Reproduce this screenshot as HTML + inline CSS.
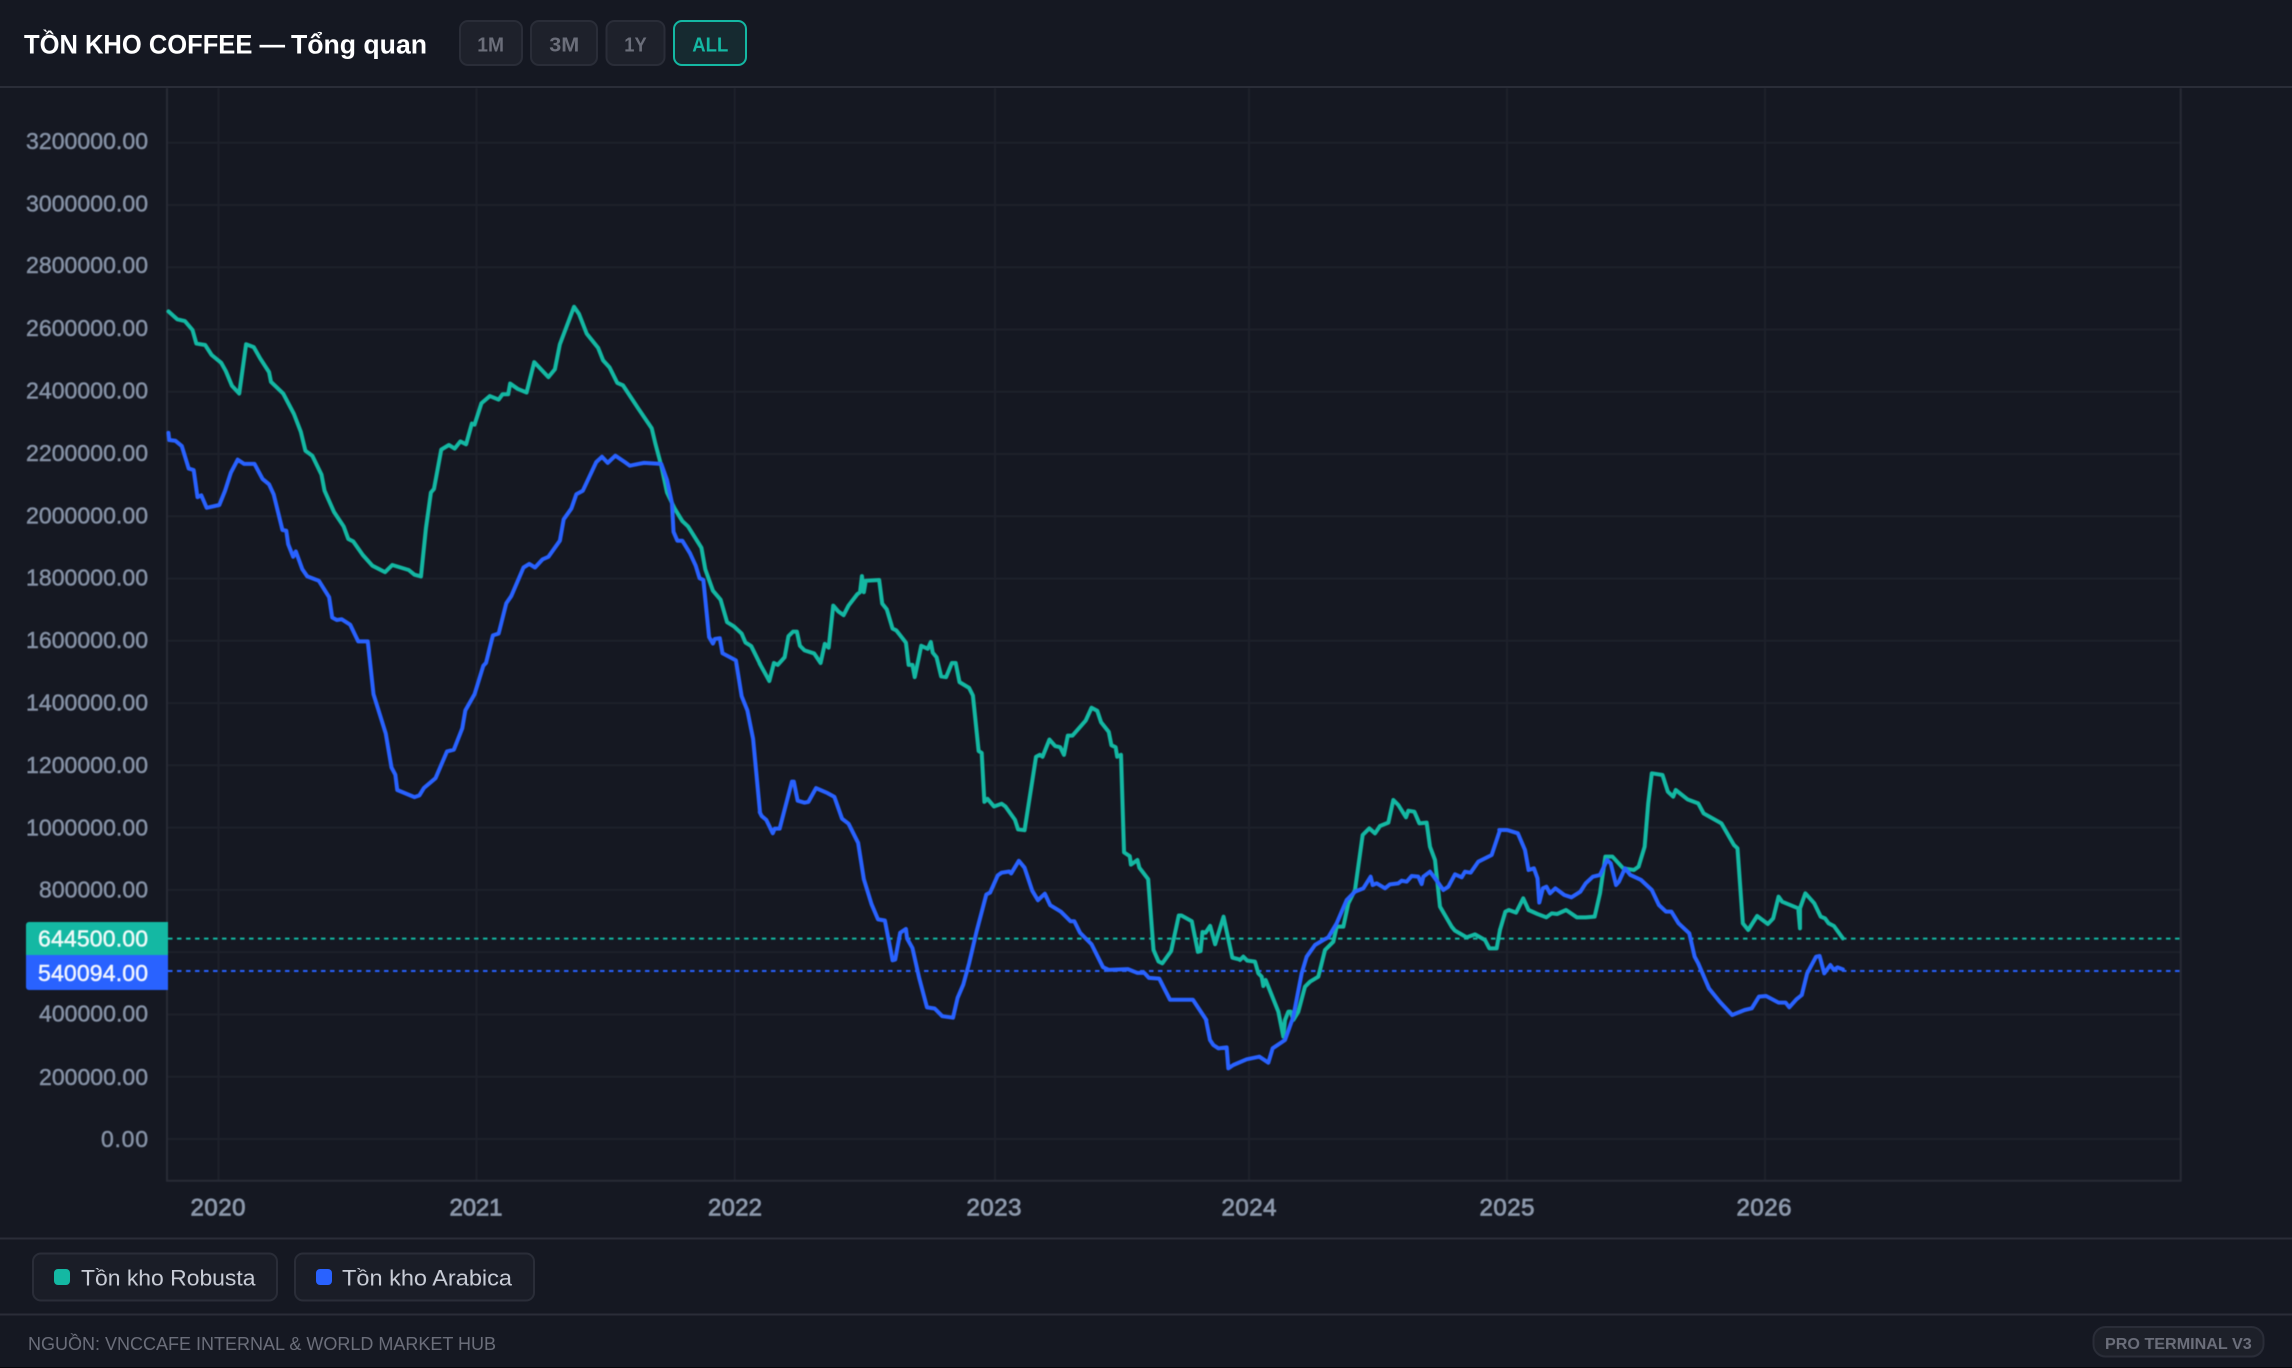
<!DOCTYPE html>
<html lang="vi"><head><meta charset="utf-8"><title>TỒN KHO COFFEE — Tổng quan</title>
<style>
html,body{margin:0;padding:0;background:#151822;width:2292px;height:1368px;overflow:hidden}
svg{display:block;font-family:"Liberation Sans","Noto Sans CJK SC",sans-serif}
.c{filter:blur(.55px)}
.l{fill:none;stroke-width:4;stroke-linejoin:round;stroke-linecap:round;vector-effect:non-scaling-stroke}
.t{stroke:#14b8a3}.b{stroke:#2962ff}
.ya text{fill:#8591a5;font-size:23px;text-anchor:end;stroke:#8591a5;stroke-width:.5}
.xa text{fill:#8c98ab;font-size:24px;text-anchor:middle;stroke:#8c98ab;stroke-width:.8}
.g{stroke:#1e212b;stroke-width:2;fill:none}
.btn{fill:#1e212b;stroke:#2a2d38;stroke-width:2}
.bt{fill:#6b6e7a;font-size:20px;font-weight:700}
</style></head><body>
<svg width="2292" height="1368" viewBox="0 0 2292 1368" xmlns="http://www.w3.org/2000/svg">
<rect width="2292" height="1368" fill="#151822"/>
<g class="c">
<path class="g" d="M218.5 88V1180M476.5 88V1180M734.7 88V1180M995 88V1180M1249 88V1180M1507 88V1180M1765 88V1180"/>
<path class="g" d="M168 142.7H2180M168 205H2180M168 267.2H2180M168 329.5H2180M168 391.8H2180M168 454H2180M168 516.3H2180M168 578.6H2180M168 640.8H2180M168 703.1H2180M168 765.3H2180M168 827.6H2180M168 889.9H2180M168 952.1H2180M168 1014.5H2180M168 1076.7H2180M168 1139H2180"/>
<path d="M167 88V1180.7H2180.7V88" fill="none" stroke="#282b36" stroke-width="2"/>
<path d="M168 938.6H2181" stroke="#14b8a3" stroke-width="2" stroke-dasharray="4.5 4.5"/>
<path d="M168 971H2181" stroke="#2962ff" stroke-width="2" stroke-dasharray="4.5 4.5"/>
<g transform="translate(160,280) scale(.38265,.35714)">
<polyline class="l t" points="22,88 45,110 65,115 85,140 95,178 118,182 135,210 160,232 172,255 188,296 207,318 225,180 245,188 262,220 285,258 290,285 322,318 350,375 368,425 380,478 398,492 422,545 430,590 455,650 480,690 492,725 505,732 530,770 555,800 588,818 607,798 650,812 665,825 682,830 695,695 708,595 716,585 735,475 755,462 770,472 785,452 800,460 815,402 822,405 840,345 862,325 885,335 895,320 910,320 915,290 935,305 958,315 978,230 1015,272 1032,250 1045,180 1082,75 1095,95 1115,150 1145,190 1158,225 1175,245 1195,288 1210,295 1250,360 1285,415 1295,460 1310,520 1325,595 1345,640 1365,675 1380,690 1415,750 1425,810 1445,870 1465,895 1482,958 1500,970 1520,990 1530,1015 1545,1025 1568,1075"/>
</g>
<g transform="translate(640,420) scale(.38265)">
<polyline class="l t" points="313,637 338,682 350,635 360,640 378,620 388,565 400,553 410,553 418,590 430,602 455,610 472,635 483,585 493,595 505,485 518,500 532,510 545,485 568,455 575,450 580,408 585,450 590,420 625,418 633,480 645,495 660,545 670,550 695,582 702,640 712,640 718,672 735,590 752,598 760,580 765,608 775,620 787,670 800,672 815,635 825,635 835,685 860,700 870,720 885,865 893,870 900,998 908,990 925,1010 945,1003 955,1010 980,1045 988,1070 1005,1072 1035,880 1045,875 1052,880 1070,835 1085,852 1098,855 1108,875 1118,825 1130,825 1165,785 1180,752 1195,760 1205,790 1225,815 1232,850 1243,855 1247,880 1257,875 1265,1130 1280,1140 1283,1162 1300,1150 1305,1170 1328,1200 1342,1385 1355,1415 1365,1420 1388,1388 1408,1295 1415,1295 1442,1310 1458,1390 1465,1388 1470,1338 1478,1340 1490,1322 1503,1370 1525,1298 1548,1405 1568,1410"/>
</g>
<g transform="translate(1000,700) scale(.33333)">
<polyline class="l t" points="720,780 730,770 742,782 765,785 775,820 785,830 790,858 797,840 815,885 835,935 850,1010 855,960 865,935 872,935 880,960 895,935 915,860 930,845 955,830 975,750 1000,725 1010,680 1030,680 1045,610 1065,570 1088,405 1108,385 1125,400 1140,378 1165,368 1180,300 1195,315 1218,352 1225,332 1243,335 1258,370 1280,368 1290,440 1305,480 1320,620 1355,680 1365,692 1400,712 1425,703 1455,720 1468,745 1490,745 1500,690"/>
</g>
<g transform="translate(1300,760) scale(.35714,.33333)">
<polyline class="l t" points="560,510 575,455 585,450 605,458 625,415 640,450 665,462 690,472 705,460 720,462 745,450 775,472 800,472 825,470 840,400 855,290 875,290 905,325 935,330 948,320 965,260 975,130 985,40 1015,45 1030,95 1045,110 1052,90 1085,118 1115,130 1130,160 1180,190 1215,255 1225,265 1240,490 1255,510 1280,468 1310,492 1325,475 1340,410 1350,425 1395,445 1400,505 1400,445 1415,400 1440,430 1458,470 1470,475 1480,490 1495,498 1520,535"/>
</g>
<g transform="translate(160,280) scale(.38265,.35714)">
<polyline class="l b" points="22,428 24,448 40,450 57,465 75,528 88,532 98,608 108,603 122,638 155,630 170,590 185,540 203,503 220,515 247,515 268,557 285,572 297,600 320,700 330,702 335,740 348,775 355,760 372,810 385,830 415,842 442,888 450,945 462,952 475,950 497,965 518,1012 543,1012 558,1160 590,1270 605,1365 615,1385 620,1428 665,1448 678,1443 690,1422 720,1395 750,1320 768,1315 790,1255 798,1205 822,1160 845,1080 852,1072 870,995 885,990 905,905 918,885 950,805 965,795 980,805 1000,782 1015,775 1045,730 1055,670 1075,640 1088,600 1105,590 1140,510 1155,495 1170,512 1190,492 1215,510 1228,520 1250,515 1265,512 1310,515 1325,560 1338,625 1342,705 1352,730 1365,730 1385,765 1400,800 1410,835 1420,840 1435,1000 1445,1018 1450,1005 1463,1003 1470,1045 1505,1065 1520,1165 1535,1205 1550,1285 1568,1490"/>
</g>
<g transform="translate(640,420) scale(.38265)">
<polyline class="l b" points="313,1025 318,1035 330,1045 347,1080 352,1068 365,1068 380,1010 397,945 402,945 412,995 430,1000 440,998 460,962 490,975 508,985 528,1042 545,1055 570,1105 585,1200 605,1265 622,1305 640,1308 660,1412 667,1410 680,1340 695,1330 698,1355 712,1380 730,1460 750,1535 770,1538 790,1558 818,1562 830,1510 845,1475 860,1420 880,1335 905,1240 915,1235 935,1190 945,1183 965,1180 970,1185 990,1152 1005,1170 1025,1230 1040,1255 1058,1238 1072,1268 1100,1285 1125,1310 1135,1310 1150,1340 1180,1370 1210,1430 1225,1437 1275,1435 1300,1445 1318,1445 1330,1458 1357,1460 1385,1515 1445,1515 1480,1568"/>
</g>
<g transform="translate(1000,700) scale(.33333)">
<polyline class="l b" points="618,960 630,1020 640,1035 655,1045 680,1042 685,1105 700,1095 740,1078 778,1070 790,1078 805,1088 818,1045 855,1020 880,950 905,820 920,770 945,735 970,720 985,712 1010,670 1040,600 1065,575 1090,565 1112,530 1118,555 1130,550 1155,565 1170,553 1195,550 1205,542 1220,545 1235,528 1255,530 1265,552 1270,530 1290,515 1305,535 1330,570 1345,560 1365,523 1385,532 1395,515 1412,518 1435,485 1475,465 1500,390"/>
</g>
<g transform="translate(1300,760) scale(.35714,.33333)">
<polyline class="l b" points="558,210 580,210 610,220 630,270 640,330 655,325 665,355 670,428 680,385 690,380 700,400 715,385 740,405 760,412 785,395 800,370 820,350 840,345 860,300 870,310 885,375 893,365 910,325 925,345 955,360 985,390 1005,435 1025,455 1040,455 1060,490 1090,520 1105,590 1115,610 1145,685 1175,725 1210,765 1245,750 1265,745 1285,710 1305,708 1340,728 1360,728 1370,742 1390,718 1405,705 1420,640 1445,590 1455,588 1468,640 1485,615 1495,630 1505,622 1520,628"/>
</g>
<g class="ya">
<text x="148" y="149" textLength="122">3200000.00</text>
<text x="148" y="211.4" textLength="122">3000000.00</text>
<text x="148" y="272.8" textLength="122">2800000.00</text>
<text x="148" y="336.2" textLength="122">2600000.00</text>
<text x="148" y="398.5" textLength="122">2400000.00</text>
<text x="148" y="461" textLength="122">2200000.00</text>
<text x="148" y="523.3" textLength="122">2000000.00</text>
<text x="148" y="585.7" textLength="122">1800000.00</text>
<text x="148" y="648.1" textLength="122">1600000.00</text>
<text x="148" y="710.5" textLength="122">1400000.00</text>
<text x="148" y="772.9" textLength="122">1200000.00</text>
<text x="148" y="835.3" textLength="122">1000000.00</text>
<text x="148" y="897.7" textLength="109">800000.00</text>
<text x="148" y="1021.4" textLength="109">400000.00</text>
<text x="148" y="1084.8" textLength="109">200000.00</text>
<text x="148" y="1147.2" textLength="47">0.00</text>
</g>
<g class="xa">
<text x="218" y="1215.5" textLength="55">2020</text>
<text x="476" y="1215.5" textLength="53">2021</text>
<text x="735" y="1215.5" textLength="54">2022</text>
<text x="994" y="1215.5" textLength="55">2023</text>
<text x="1249" y="1215.5" textLength="55">2024</text>
<text x="1507" y="1215.5" textLength="55">2025</text>
<text x="1764" y="1215.5" textLength="55">2026</text>
</g>
<path d="M168 922H29a3 3 0 0 0-3 3V955H168Z" fill="#14b8a3"/>
<path d="M168 955H26V987a3 3 0 0 0 3 3H168Z" fill="#2962ff"/>
<text x="148" y="946.7" text-anchor="end" textLength="110" font-size="23" fill="#eefaf8" stroke="#eefaf8" stroke-width=".5">644500.00</text>
<text x="148" y="981" text-anchor="end" textLength="110" font-size="23" fill="#f0f4ff" stroke="#f0f4ff" stroke-width=".5">540094.00</text>
</g>
<!-- header -->
<rect x="0" y="86" width="2292" height="2" fill="#2a2d38"/>
<text x="24" y="53.5" font-size="27" font-weight="700" fill="#fff" textLength="261" lengthAdjust="spacingAndGlyphs">TỒN KHO COFFEE —</text>
<text x="291" y="53.5" font-size="27" font-weight="700" fill="#fff" textLength="136" lengthAdjust="spacingAndGlyphs">Tổng quan</text>
<rect class="btn" x="460" y="21" width="62" height="44" rx="8"/>
<rect class="btn" x="531" y="21" width="66" height="44" rx="8"/>
<rect class="btn" x="606.5" y="21" width="58" height="44" rx="8"/>
<rect x="674" y="21" width="72" height="44" rx="8" fill="#162a30" stroke="#14b8a3" stroke-width="2"/>
<text class="bt" x="477.3" y="51.3" textLength="26.7" lengthAdjust="spacingAndGlyphs">1M</text>
<text class="bt" x="549.3" y="51.3" textLength="30" lengthAdjust="spacingAndGlyphs">3M</text>
<text class="bt" x="624.3" y="51.3" textLength="22.4" lengthAdjust="spacingAndGlyphs">1Y</text>
<text class="bt" style="fill:#14b8a3" x="692.3" y="51.3" textLength="36" lengthAdjust="spacingAndGlyphs">ALL</text>
<!-- legend -->
<rect x="0" y="1237.5" width="2292" height="2" fill="#2a2d38"/>
<rect x="33" y="1253.5" width="244" height="47" rx="8" fill="#1a1d27" stroke="#2a2d38" stroke-width="2"/>
<rect x="54" y="1269" width="16" height="16" rx="4" fill="#14b8a3"/>
<text x="81" y="1285.7" font-size="22.5" fill="#c8ccd6" textLength="174.5" lengthAdjust="spacingAndGlyphs">Tồn kho Robusta</text>
<rect x="295" y="1253.5" width="239" height="47" rx="8" fill="#1a1d27" stroke="#2a2d38" stroke-width="2"/>
<rect x="316" y="1269" width="16" height="16" rx="4" fill="#2962ff"/>
<text x="342" y="1285.7" font-size="22.5" fill="#c8ccd6" textLength="170" lengthAdjust="spacingAndGlyphs">Tồn kho Arabica</text>
<!-- footer -->
<rect x="0" y="1313.5" width="2292" height="2" fill="#2a2d38"/>
<text x="28" y="1350" font-size="18" fill="#6b6e7a" textLength="468" lengthAdjust="spacingAndGlyphs">NGUỒN: VNCCAFE INTERNAL &amp; WORLD MARKET HUB</text>
<rect x="2093.5" y="1327" width="170" height="29.5" rx="12" fill="#1d2029" stroke="#2a2d38" stroke-width="2"/>
<text x="2105" y="1349" font-size="16" font-weight="700" fill="#6b6e7a" textLength="146.7" lengthAdjust="spacingAndGlyphs">PRO TERMINAL V3</text>
<rect x="0" y="1367" width="2292" height="1" fill="#05060a"/>
</svg>
</body></html>
